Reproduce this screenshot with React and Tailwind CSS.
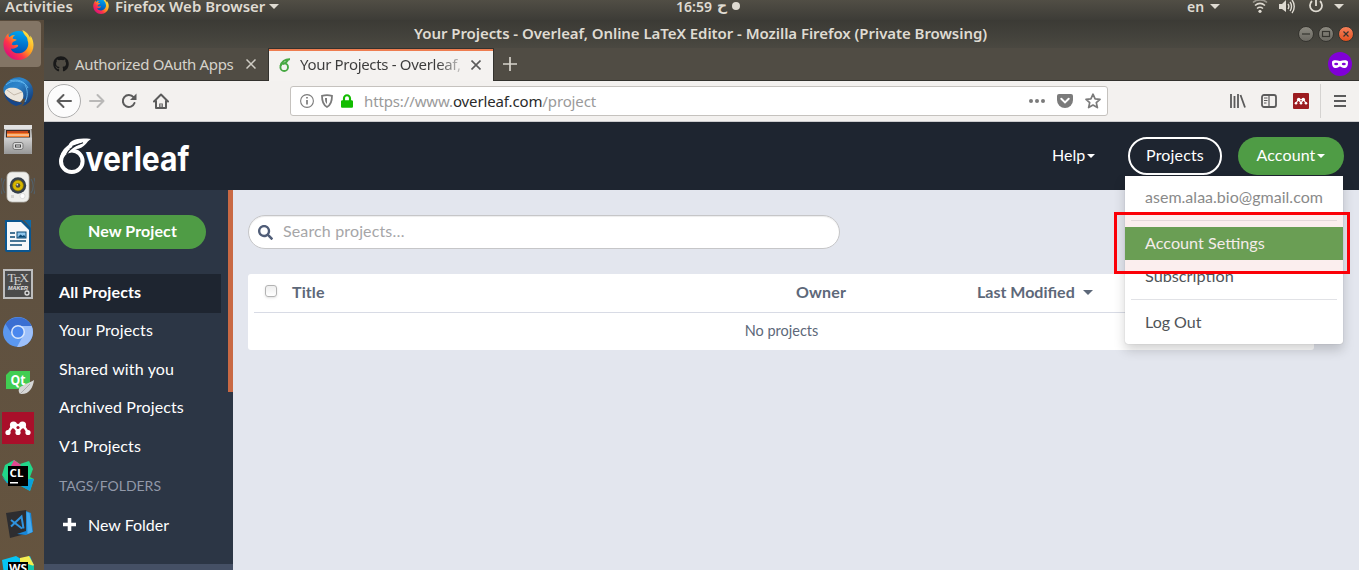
import React from "react";
import { FaGithub, FaSearch, FaLock } from "react-icons/fa";

const UI = "font-['Noto_Sans',sans-serif]";

function Caret({ className = "" }) {
  return (
    <svg viewBox="0 0 10 5" className={"shrink-0 " + className}>
      <path d="M0 0h10L5 5z" fill="currentColor" />
    </svg>
  );
}

function FirefoxIcon({ className = "", id }) {
  return (
    <svg viewBox="0 0 32 32" className={className}>
      <defs>
        <linearGradient id={id + "a"} x1="0.85" y1="0.1" x2="0.15" y2="0.8">
          <stop offset="0" stopColor="#ffe843" />
          <stop offset="0.45" stopColor="#ff9a1f" />
          <stop offset="0.72" stopColor="#ff3647" />
          <stop offset="1" stopColor="#e01573" />
        </linearGradient>
        <linearGradient id={id + "b"} x1="0.6" y1="0" x2="0.4" y2="1">
          <stop offset="0" stopColor="#00a6f0" />
          <stop offset="1" stopColor="#0045ad" />
        </linearGradient>
      </defs>
      <circle cx="16" cy="15" r="13" fill={"url(#" + id + "b)"} />
      <path
        d="M20 1c1 3 1.500 4.500 4 7 1 1 1.400 2.400 1.400 4 2 4-.4 12-8.400 13-5 .5-8-2-9-5 3 1 5-.2 7-1.600 1.300-.9.600-2.200-.7-2.100-2 .2-3.300 1.200-5.300-.3l1.200-2.500 4-2.200c-.7-1-2.400-.5-4.200-1.600.2-1.700 1.300-2.800 2.400-3.600C9.500 6 8 7 7 8.200 5.600 8 5.400 6 5.600 4.500 1.800 8 .2 12.500.5 17c.6 8.500 7.300 15 15.500 15s15.500-6.400 15.500-15.400c0-4.600-1.900-8.500-3.500-10 .3 1.300.2 2 .1 2.600C26.500 5.500 24 2.800 20 1z"
        fill={"url(#" + id + "a)"}
      />
    </svg>
  );
}

function Thunderbird() {
  return (
    <svg viewBox="0 0 32 32" className="h-8 w-8">
      <defs>
        <linearGradient id="tb" x1="0" y1="0" x2="1" y2="1">
          <stop offset="0" stopColor="#1b72b8" />
          <stop offset="0.4" stopColor="#2f86cc" />
          <stop offset="1" stopColor="#0b2a66" />
        </linearGradient>
      </defs>
      <path d="M3 9C7 2 16-1 23 3c6 3 9 9 8 15-1 6-5 11-11 12 2-2 3-4 3-7L2 17c-1-3-1-6 1-8z" fill="url(#tb)" />
      <path d="M3 18c-1-3 1-5 4-6 6-1 12 1 14 5 1 4 0 7-3 9-5-1-12-3-15-8z" fill="#ece6dc" />
      <path d="M5 14l7 5 8-3" stroke="#c4b9ab" strokeWidth="1" fill="none" />
      <path d="M4 9c5-5 13-5 19-1M8 5c8-3 15 1 18 7M23 9c3 5 3 12 0 17" stroke="#63b7ee" strokeWidth="0.900" fill="none" />
      <path d="M2 17c1 6 6 11 12 13l6-2c0-2-3-2-5-2-4-1-10-4-13-9z" fill="#17478b" />
    </svg>
  );
}

function Files() {
  return (
    <svg viewBox="0 0 30 32" className="h-8 w-[30px]">
      <defs>
        <linearGradient id="fl" x1="0" y1="0" x2="0" y2="1">
          <stop offset="0" stopColor="#d2d2d2" />
          <stop offset="1" stopColor="#979797" />
        </linearGradient>
      </defs>
      <path d="M2 1h26l1 11v18H1V12z" fill="#b9b9b9" />
      <rect x="1" y="1" width="28" height="4" fill="#e2e2e2" />
      <rect x="3" y="6" width="24" height="8" fill="#3b2a22" />
      <rect x="4" y="7" width="21" height="5" fill="#c9471a" />
      <rect x="4" y="9" width="22" height="4" fill="#f47b26" />
      <rect x="4" y="10.500" width="22" height="1" fill="#fff1dd" />
      <rect x="1" y="13.500" width="28" height="16.500" rx="1" fill="url(#fl)" />
      <rect x="10" y="18.500" width="10" height="7" rx="2" fill="#dcdcdc" stroke="#777" />
      <rect x="12.500" y="21" width="5" height="2" fill="#fff" stroke="#444" />
    </svg>
  );
}

function Speaker() {
  return (
    <svg viewBox="0 0 34 32" className="h-8 w-[34px]">
      <path d="M4 8c-3 4-3 10 0 14M30 8c3 4 3 10 0 14M1 7c-2 5-2 11 0 16M33 7c2 5 2 11 0 16" stroke="#52606a" strokeWidth="1.200" fill="none" />
      <rect x="6" y="1" width="22" height="30" rx="5" fill="#efefec" stroke="#bdbdb8" strokeWidth="0.800" />
      <circle cx="17" cy="14.500" r="8.200" fill="#36404c" />
      <circle cx="17" cy="14.500" r="5.400" fill="#d6b700" stroke="#7f6b00" strokeWidth="0.700" />
      <circle cx="17" cy="14.500" r="2.300" fill="#4a4a42" />
      <circle cx="16.300" cy="13.700" r="0.900" fill="#ddd" />
      <circle cx="21.500" cy="25" r="2.600" fill="#fff" stroke="#ccc" strokeWidth="0.600" />
      <rect x="10" y="24" width="3" height="3" fill="#d5d5d2" />
    </svg>
  );
}

function Writer() {
  return (
    <svg viewBox="0 0 26 32" className="h-8 w-[26px]">
      <path d="M0 0h17l9 8v22a2 2 0 0 1-2 2H2a2 2 0 0 1-2-2z" fill="#0a5690" />
      <path d="M19 0h7v8z" fill="#0f6aa8" />
      <path d="M2 2h14l8 8v20H2z" fill="#f6f8fa" />
      <path d="M5 13h5M5 17h5M5 21h16M5 25h12" stroke="#0b4a76" strokeWidth="1.700" />
      <rect x="12" y="12" width="9" height="6" fill="#8fc6ec" stroke="#0b4a76" />
      <path d="M12.500 17.500l3-3 2 1.500 1.500-1 2 2.500z" fill="#0b4a76" />
    </svg>
  );
}

function TexMaker() {
  return (
    <svg viewBox="0 0 30 30" className="h-[30px] w-[30px]">
      <rect x="1" y="1" width="28" height="28" fill="#4b4b4b" stroke="#bdbdbd" strokeWidth="2" />
      <text y="13" fontFamily="Liberation Serif" fontSize="13" fill="#cfcfcf">
        <tspan x="4.500">T</tspan><tspan x="10.500" dy="2.500">E</tspan><tspan x="16.500" dy="-2.500">X</tspan>
      </text>
      <text x="5" y="20.500" fontFamily="Liberation Sans" fontSize="5.500" fontStyle="italic" fontWeight="700" fill="#e0e0e0" textLength="20">MAKER</text>
      <circle cx="24" cy="24" r="2" fill="none" stroke="#ddd" strokeWidth="1.300" />
    </svg>
  );
}

function Chromium() {
  return (
    <svg viewBox="0 0 30 30" className="h-[30px] w-[30px]">
      <circle cx="15" cy="15" r="15" fill="#5b98f0" />
      <path d="M2.500 7a15 15 0 0 1 26 2H15l-6 8z" fill="#3b6fd2" />
      <path d="M15 9h13.700A15 15 0 0 1 14 30l6.500-12z" fill="#9dc0fa" />
      <circle cx="15" cy="15" r="7" fill="#dce8fb" />
      <circle cx="15" cy="15" r="5.500" fill="#4a87ee" />
    </svg>
  );
}

function QtIcon() {
  return (
    <svg viewBox="0 0 28 24" className="h-6 w-7">
      <path d="M4 0h20v18H0V4z" fill="#41cd52" />
      <text x="4.500" y="14" fontFamily="Open Sans" fontWeight="700" fontSize="14" fill="#fff" textLength="15" lengthAdjust="spacingAndGlyphs">Qt</text>
      <path d="M28 9c-1 8-5 15-14 14-5-8 6-9 14-14z" fill="#d6d6d6" />
      <path d="M14 23l10-10" stroke="#999" strokeWidth="0.700" />
    </svg>
  );
}

function Mendeley({ className, bg }) {
  return (
    <svg viewBox="0 0 32 32" className={className}>
      <rect width="32" height="32" fill={bg} />
      <path d="M6 20.500L11 13l5 7 5-7 5 7.500" stroke="#fff" strokeWidth="2.400" fill="none" />
      <g fill="#fff">
        <circle cx="11.500" cy="13" r="3.600" />
        <circle cx="20.500" cy="13" r="3.600" />
        <circle cx="16" cy="15" r="3.200" />
        <circle cx="6" cy="20.500" r="2.600" />
        <circle cx="16" cy="20.500" r="2.600" />
        <circle cx="26" cy="20.500" r="2.600" />
      </g>
      <circle cx="16" cy="15.500" r="1.600" fill={bg} />
    </svg>
  );
}

function CLion() {
  return (
    <svg viewBox="0 0 32 32" className="h-8 w-8">
      <path d="M3 5L12 0l6 4 9-3 4 8-3 8 4 2-4 12-9-5-14-3-5-8z" fill="#21d789" />
      <path d="M12 0l7 5-4 4-6-3z" fill="#e0488f" />
      <path d="M0 17l6 5 22-3 4 0-4 12-9-5-14-3z" fill="#0b9fdb" />
      <rect x="6" y="6" width="20" height="20" fill="#000" />
      <text x="7.500" y="16.500" fontFamily="Open Sans" fontWeight="700" fontSize="11" fill="#fff" textLength="14" lengthAdjust="spacingAndGlyphs">CL</text>
      <rect x="8" y="22" width="8" height="1.500" fill="#fff" />
    </svg>
  );
}

function VsCode() {
  return (
    <svg viewBox="0 0 28 30" className="h-[30px] w-7">
      <path d="M0 4l20-3 7 22-23 6z" fill="#2d2d30" />
      <path d="M20 2l5 2 2 19-7 3-9-1 9-3z" fill="#1887d8" />
      <path d="M20.500 3l3 1 3 19-5 2z" fill="#45a9ee" />
      <path d="M5 11l11 8.500M5 17.500L15.500 7.500l2 12" stroke="#2f93df" strokeWidth="2" fill="none" />
    </svg>
  );
}

function WebStorm() {
  return (
    <svg viewBox="0 0 32 32" className="h-8 w-8">
      <path d="M0 4L14 0l5 3 9-3 4 10v22H4z" fill="#07c3f2" />
      <path d="M18 2l9-2 5 9-6 5-8-6z" fill="#f5ee50" />
      <path d="M26 8l6 2v22h-8z" fill="#12c5a9" />
      <rect x="6" y="6" width="20" height="20" fill="#000" />
      <text x="7" y="16" fontFamily="Open Sans" fontWeight="700" fontSize="11" fill="#fff" textLength="18" lengthAdjust="spacingAndGlyphs">WS</text>
    </svg>
  );
}

function TopBar() {
  return (
    <div className={"flex h-5 shrink-0 items-start bg-linear-to-b from-[#514e45] to-[#3d3c37] text-[15px] font-semibold leading-[13px] text-[#dfdbd2] whitespace-nowrap " + UI}>
      <div className="w-[93px] pl-[5px] tracking-[0.1px]">Activities</div>
      <FirefoxIcon id="ft" className="-mt-[2px] h-4 w-4" />
      <div className="ml-[6px] w-[154px]">Firefox Web Browser</div>
      <Caret className="mt-1 h-[5px] w-[10px]" />
      <div className="ml-[397px] w-[36px] text-[14px]">16:59</div>
      <div className="ml-[5px] w-[12px] font-['DejaVu_Sans',sans-serif] text-[14px] font-bold">ح</div>
      <div className="ml-[3px] mt-[2px] h-2 w-2 rounded-full bg-[#dfdbd2]" />
      <div className="ml-[447px] w-[23px] text-[14px]">en</div>
      <Caret className="mt-1 h-[5px] w-[10px]" />
      <svg viewBox="0 0 16 14" className="ml-[32px] h-[14px] w-4" fill="none" stroke="#dfdbd2" strokeWidth="1.600">
        <path d="M1 2.500c4-3.500 10-3.500 14 0" opacity=".5" />
        <path d="M3 5.500c3-2.600 7-2.600 10 0M5 8.500c2-1.600 4-1.600 6 0" />
        <circle cx="8" cy="11.300" r="1.600" fill="#dfdbd2" stroke="none" />
      </svg>
      <svg viewBox="0 0 16 14" className="ml-[11px] h-[14px] w-4" fill="none" stroke="#dfdbd2" strokeWidth="1.400">
        <path d="M0 4h3l4-4v12L3 9H0z" fill="#dfdbd2" stroke="none" />
        <path d="M9 4c1 1.500 1 3.500 0 5M11 2c2 2.500 2 6.500 0 9M13 0c3 3.500 3 9.500 0 13" />
      </svg>
      <svg viewBox="0 0 16 14" className="ml-[13px] h-[14px] w-4" fill="none" stroke="#dfdbd2" strokeWidth="1.800">
        <path d="M4 1a6 6 0 1 0 8 0M8-2v8" />
      </svg>
      <Caret className="ml-[10px] mt-1 h-[5px] w-[10px]" />
    </div>
  );
}

function Dock() {
  return (
    <div className="flex w-11 shrink-0 flex-col overflow-hidden bg-linear-to-b from-[#574a3b] via-[#5f5140] to-[#65543f] *:shrink-0">
      <div className="mt-px flex h-[46px] w-[41px] items-center rounded-r bg-[#837565] pl-[3px]">
        <FirefoxIcon id="fd" className="h-[31px] w-[31px]" />
      </div>
      <div className="mt-[9px] pl-[2px]"><Thunderbird /></div>
      <div className="mt-4 pl-[3px]"><Files /></div>
      <div className="mt-[15px] pl-px"><Speaker /></div>
      <div className="mt-[17px] pl-[5px]"><Writer /></div>
      <div className="mt-[17px] pl-[3px]"><TexMaker /></div>
      <div className="mt-[18px] pl-[3px]"><Chromium /></div>
      <div className="mt-[24px] pl-[6px]"><QtIcon /></div>
      <div className="mt-[17px] pl-[2px]"><Mendeley className="h-8 w-8" bg="#a90f2a" /></div>
      <div className="mt-[16px] pl-[2px]"><CLion /></div>
      <div className="mt-[17px] pl-[6px]"><VsCode /></div>
      <div className="mt-[17px] pl-[2px]"><WebStorm /></div>
    </div>
  );
}

function WindowButton({ close, children }) {
  return (
    <div className={"h-4 w-4 rounded-full border border-[#35342f] " + (close ? "bg-linear-to-b from-[#f58059] to-[#e2501c]" : "bg-linear-to-b from-[#8b8980] to-[#6a6861]")}>
      <svg viewBox="0 0 14 14" className="h-[14px] w-[14px]" fill="none" stroke="#35342f" strokeWidth="1.200">{children}</svg>
    </div>
  );
}

function Chrome() {
  return (
    <div className={"flex shrink-0 flex-col whitespace-nowrap " + UI}>
      <div className="flex h-7 items-center bg-linear-to-b from-[#3b3a35] to-[#4a4841]">
        <div className="-mt-[2px] ml-[370px] w-[892px] text-[15px] font-semibold leading-5 tracking-[-0.06px] text-[#dfdbd2]">
          Your Projects - Overleaf, Online LaTeX Editor - Mozilla Firefox (Private Browsing)
        </div>
        <div className="-ml-[8px] flex gap-1">
          <WindowButton><path d="M3 7h8" /></WindowButton>
          <WindowButton><rect x="3.500" y="4.500" width="7" height="5" /></WindowButton>
          <WindowButton close><path d="M4.500 4.500l5 5M9.500 4.500l-5 5" /></WindowButton>
        </div>
      </div>
      <div className="flex h-[33px] bg-[#504c44]">
        <div className="flex w-[224px] items-center border-b border-[#33322e] pl-[9px]">
          <FaGithub className="h-4 w-4 text-[#191919]" />
          <div className="ml-[6px] w-[171px] text-[15px] tracking-[-0.33px] text-[#d6d3cb]">Authorized OAuth Apps</div>
          <svg viewBox="0 0 10 10" className="h-[10px] w-[10px]"><path d="M.5.5l9 9M9.500.5l-9 9" stroke="#cfccc4" strokeWidth="1.500" /></svg>
        </div>
        <div className="flex w-[226px] items-center border-x border-t border-[#33322e] bg-[#f4f2f0] shadow-[inset_0_2px_0_#ee7d50]">
          <svg viewBox="0 0 12 14" className="ml-[10px] h-[14px] w-3" fill="none" stroke="#47a842" strokeWidth="1.900">
            <circle cx="5.200" cy="9.200" r="3.800" />
            <path d="M1.600 8C2 4 6 1 11 1.200M4 6c2-.5 4-2 5-4" />
          </svg>
          <div className="-mt-px ml-[9px] w-[162px] bg-linear-to-r from-[#3b3b3b] from-85% to-[#3b3b3b33] bg-clip-text text-[15px] tracking-[-0.32px] text-transparent">
            Your Projects - Overleaf,
          </div>
          <svg viewBox="0 0 10 10" className="ml-[9px] h-[10px] w-[10px]"><path d="M.5.5l9 9M9.500.5l-9 9" stroke="#5b5b5b" strokeWidth="1.600" /></svg>
        </div>
        <div className="flex grow items-center border-b border-[#33322e]">
          <svg viewBox="0 0 14 14" className="ml-[9px] h-[14px] w-[14px]"><path d="M7 0v14M0 7h14" stroke="#d6d3cb" strokeWidth="1.700" /></svg>
          <svg viewBox="0 0 24 24" className="ml-auto mr-[7px] h-6 w-6">
            <circle cx="12" cy="12" r="12" fill="#8000d7" />
            <path d="M4 10c0-2 4-2.500 8-1 4-1.500 8-1 8 1 0 4-1 6-4 6-2 0-3-1.500-4-1.500S10 16 8 16c-3 0-4-2-4-6z" fill="#fff" />
            <ellipse cx="8.200" cy="12" rx="2" ry="1.300" fill="#8000d7" />
            <ellipse cx="15.800" cy="12" rx="2" ry="1.300" fill="#8000d7" />
          </svg>
        </div>
      </div>
      <div className="flex h-[41px] items-center border-b border-[#cbcbcd] bg-[#f3f1ef] text-[#5b5b5b]">
        <div className="ml-[3px] flex h-[34px] w-[34px] items-center justify-center rounded-full border border-[#adadad] bg-[#fcfcfc]">
          <svg viewBox="0 0 16 16" className="h-4 w-4" fill="none" stroke="currentColor" strokeWidth="2" strokeLinecap="round" strokeLinejoin="round"><path d="M15 8H1.500M7.500 2l-6 6 6 6" /></svg>
        </div>
        <svg viewBox="0 0 16 16" className="ml-2 h-4 w-4" fill="none" stroke="#b9b8b7" strokeWidth="2" strokeLinecap="round" strokeLinejoin="round"><path d="M1 8h13.500M8.500 2l6 6-6 6" /></svg>
        <svg viewBox="0 0 16 16" className="ml-4 h-4 w-4" fill="none" stroke="currentColor" strokeWidth="2"><path d="M13.500 10A6 6 0 1 1 12.500 4.200" strokeLinecap="round" /><path d="M15.500.5v6.500H9z" fill="currentColor" stroke="none" /></svg>
        <svg viewBox="0 0 16 16" className="ml-4 h-4 w-4" fill="none" stroke="currentColor" strokeWidth="2" strokeLinejoin="round" strokeLinecap="round"><path d="M1 8.500L8 1.500l7 7M3 8v7h10V8" /><path d="M6.200 15v-4.500h3.600V15z" fill="currentColor" stroke="none" /><path d="M8 11.500v2" stroke="#f3f1ef" strokeWidth="1" /></svg>
        <div className="ml-[121px] flex h-[30px] w-[818px] items-center rounded-[3px] border border-[#c5c2be] bg-white text-[15px]">
          <svg viewBox="0 0 14 14" className="ml-[9px] h-[14px] w-[14px]" fill="none" stroke="#7b7b7b"><circle cx="7" cy="7" r="6.400" strokeWidth="1.100" /><path d="M7 6v4.500M7 3v1.600" strokeWidth="1.700" /></svg>
          <svg viewBox="0 0 12 14" className="ml-[7px] h-[14px] w-3" fill="none" stroke="#7b7b7b" strokeWidth="1.800"><path d="M1 1.800c3-.9 7-.9 10 0 0 5-.5 9-5 11.200C1.500 10.800 1 6.800 1 1.800z" /><path d="M6 4v6C4.200 8.500 4 6.500 4 4z" fill="#7b7b7b" stroke="none" /></svg>
          <FaLock className="ml-2 h-[14px] w-3 text-[#12bc00]" />
          <div className="ml-[11px] w-[665px] tracking-[-0.13px] text-[#9a9a9a]">
            https://www.<span className="text-[#2a2a2a]">overleaf.com</span>/project
          </div>
          <svg viewBox="0 0 16 4" className="h-1 w-4" fill="#7b7b7b"><circle cx="2" cy="2" r="2" /><circle cx="8" cy="2" r="2" /><circle cx="14" cy="2" r="2" /></svg>
          <svg viewBox="0 0 16 14" className="ml-3 h-[14px] w-4"><path d="M2 0h12a2 2 0 0 1 2 2v4a8 8 0 0 1-16 0V2a2 2 0 0 1 2-2z" fill="#7b7b7b" /><path d="M4.300 4.800L8 8.400l3.700-3.600" stroke="#fff" strokeWidth="2" fill="none" strokeLinecap="round" /></svg>
          <svg viewBox="0 0 16 16" className="ml-3 h-4 w-4" fill="none" stroke="#7b7b7b" strokeWidth="1.700" strokeLinejoin="round"><path d="M8 1.200l2.100 4.600 4.900.5-3.700 3.300 1.100 5L8 12l-4.400 2.600 1.100-5L1 6.300l4.900-.5z" /></svg>
        </div>
        <svg viewBox="0 0 16 14" className="ml-[122px] h-[14px] w-4" fill="none" stroke="currentColor" strokeWidth="1.800"><path d="M1 0v14M4.500 2v12M8 0v14M10.500 1L15 13.500" /></svg>
        <svg viewBox="0 0 16 14" className="ml-[15px] h-[14px] w-4" fill="none" stroke="currentColor" strokeWidth="1.800"><rect x="1" y="1" width="14" height="12" rx="2" /><path d="M8 1v12" strokeWidth="1.200" /><path d="M3 4h3.500M3 6.500h3.500M3 9h2.500" strokeWidth="1" /></svg>
        <Mendeley className="ml-4 h-4 w-4 rounded-[1px]" bg="#9c1c20" />
        <div className="ml-[11px] h-[34px] w-px bg-[#d5d3d1]" />
        <svg viewBox="0 0 12 12" className="ml-[13px] h-3 w-3" stroke="currentColor" strokeWidth="1.800"><path d="M0 1h12M0 6h12M0 11h12" /></svg>
      </div>
    </div>
  );
}

function OverleafLogo() {
  return (
    <svg viewBox="0 0 132 38" className="h-[38px] w-[132px]">
      <circle cx="13.800" cy="24.300" r="10.800" fill="none" stroke="#fff" strokeWidth="4" />
      <path d="M3.500 21C4.500 15 9 10 14 8.500" fill="none" stroke="#fff" strokeWidth="3.500" />
      <path d="M9.500 11.500C11 2.500 19 .5 33 2 28 4.500 27.500 11.500 17 12.300c-3 .3-5 1.500-8 4.500C11 11.500 18 8.500 25.500 5.500 18 7 12.500 9 9.500 11.500z" fill="#fff" />
      <path d="M8.500 17.500C11 12 17 8.500 25 5.800" fill="none" stroke="#1e2530" strokeWidth="1.100" />
      <text x="27.500" y="34" fontFamily="Inter, sans-serif" fontWeight="700" fontSize="33.500" fill="#fff" textLength="104" lengthAdjust="spacingAndGlyphs">verleaf</text>
    </svg>
  );
}

function AccountMenu() {
  return (
    <div className="absolute left-[1125px] top-[176px] flex h-[168px] w-[218px] flex-col rounded-b-[3px] bg-white text-[16px] leading-6 text-[#505458] shadow-[0_6px_12px_rgba(0,0,0,0.18),0_0_1px_rgba(0,0,0,0.3)]">
      <div className="h-[39px] pl-5 pt-[9px] tracking-[0.02px] text-[#8a8a8a]">asem.alaa.bio@gmail.com</div>
      <div className="h-3 bg-[#fbeeee] px-[6px] pt-[5px]"><div className="h-px bg-[#e4d8da]" /></div>
      <div className="h-[33px] bg-[#6a9e54] pl-5 pt-1 text-[16.200px] text-[#f4ecea]">Account Settings</div>
      <div className="h-[11px] bg-[#fbeeee] pl-5 pt-1 text-[16.250px]">Subscription</div>
      <div className="mx-[6px] mt-7 h-px bg-[#e1e2e6]" />
      <div className="pl-5 pt-[10px]">Log Out</div>
    </div>
  );
}

export default function App() {
  return (
    <div className="relative flex h-[570px] w-[1359px] flex-col overflow-hidden font-[Lato,sans-serif] text-[16px]">
      <TopBar />
      <div className="flex min-h-0 grow">
        <Dock />
        <div className="flex min-w-0 grow flex-col">
          <Chrome />
          <div className="flex h-[68px] shrink-0 items-center bg-[#1e2530] text-white">
            <div className="ml-[14px]"><OverleafLogo /></div>
            <div className="ml-[862px] flex w-[76px] items-center pb-[2px]">Help<Caret className="ml-[2px] mt-[2px] h-1 w-2" /></div>
            <div className="flex h-[38px] w-[94px] items-center justify-center rounded-full border-2 border-white pb-[2px] tracking-[0.15px]">Projects</div>
            <div className="ml-4 flex h-[38px] w-[106px] items-center justify-center rounded-full bg-[#4f9c45] pb-[2px] tracking-[0.1px]">Account<Caret className="ml-[2px] mt-[2px] h-1 w-2" /></div>
          </div>
          <div className="flex min-h-0 grow">
            <div className="flex w-[189px] shrink-0 flex-col bg-[#2c3645] text-white">
              <div className="flex h-[202px] justify-between">
                <div className="flex w-[177px] flex-col">
                  <div className="ml-[15px] mt-[25px] flex h-[34px] w-[147px] items-center justify-center rounded-full bg-[#4f9c45] pb-[2px] font-bold tracking-[0.1px]">New Project</div>
                  <div className="mt-[25px] flex h-[39px] items-center bg-[#1e2530] pb-[3px] pl-[15px] font-bold tracking-[0.1px]">All Projects</div>
                  <div className="flex h-[38px] items-center pb-1 pl-[15px] tracking-[0.12px]">Your Projects</div>
                  <div className="flex h-[39px] items-center pb-[3px] pl-[15px] tracking-[0.15px]">Shared with you</div>
                </div>
                <div className="w-[5px] bg-[#c96944]" />
              </div>
              <div className="-mt-[4px] flex h-[38px] items-center pl-[15px] tracking-[0.12px]">Archived Projects</div>
              <div className="flex h-[39px] items-center pl-[15px] tracking-[0.1px]">V1 Projects</div>
              <div className="mt-px flex h-[39px] items-center pl-[15px] text-[14px] text-[#9299a9]">TAGS/FOLDERS</div>
              <div className="flex h-[39px] items-center pl-[19px]">
                <svg viewBox="0 0 13 13" className="mr-[12px] h-[13px] w-[13px]"><path d="M6.500 0v13M0 6.500h13" stroke="#fff" strokeWidth="3.600" /></svg>
                New Folder
              </div>
              <div className="mt-auto h-[6px] bg-[#455065]" />
            </div>
            <div className="flex grow flex-col bg-[#e3e6ee]">
              <div className="ml-[15px] mt-[25px] flex h-[34px] w-[592px] items-center rounded-full border border-[#c6c6c8] bg-white pb-[2px] tracking-[0.14px] text-[#a6a6a8] shadow-[inset_0_1px_1px_rgba(0,0,0,0.075)]">
                <FaSearch className="ml-[9px] mr-[10px] mt-[3px] h-[15px] w-[15px] text-[#505d78]" />Search projects…
              </div>
              <div className="ml-[15px] mt-[25px] flex h-[76px] w-[1066px] flex-col rounded-[3px] bg-white px-[6px] text-[#5d6879]">
                <div className="flex h-[39px] items-center border-b border-[#d8dbe5] pb-[2px] font-bold">
                  <div className="ml-[11px] -mt-[2px] h-3 w-3 rounded-[3px] border border-[#b3b3b3] bg-linear-to-b from-[#eee] to-white shadow-sm" />
                  <div className="ml-[15px] w-[504px] tracking-[0.1px]">Title</div>
                  <div className="w-[181px] tracking-[0.15px]">Owner</div>
                  <div className="flex items-center">Last Modified<Caret className="ml-2 h-[5px] w-[10px]" /></div>
                </div>
                <div className="flex h-[36px] items-center justify-center pl-px text-[14.500px]">No projects</div>
              </div>
            </div>
          </div>
        </div>
      </div>
      <AccountMenu />
      <div className="absolute left-[1114px] top-[212px] h-[62px] w-[236px] border-3 border-[#fb0007]" />
    </div>
  );
}
